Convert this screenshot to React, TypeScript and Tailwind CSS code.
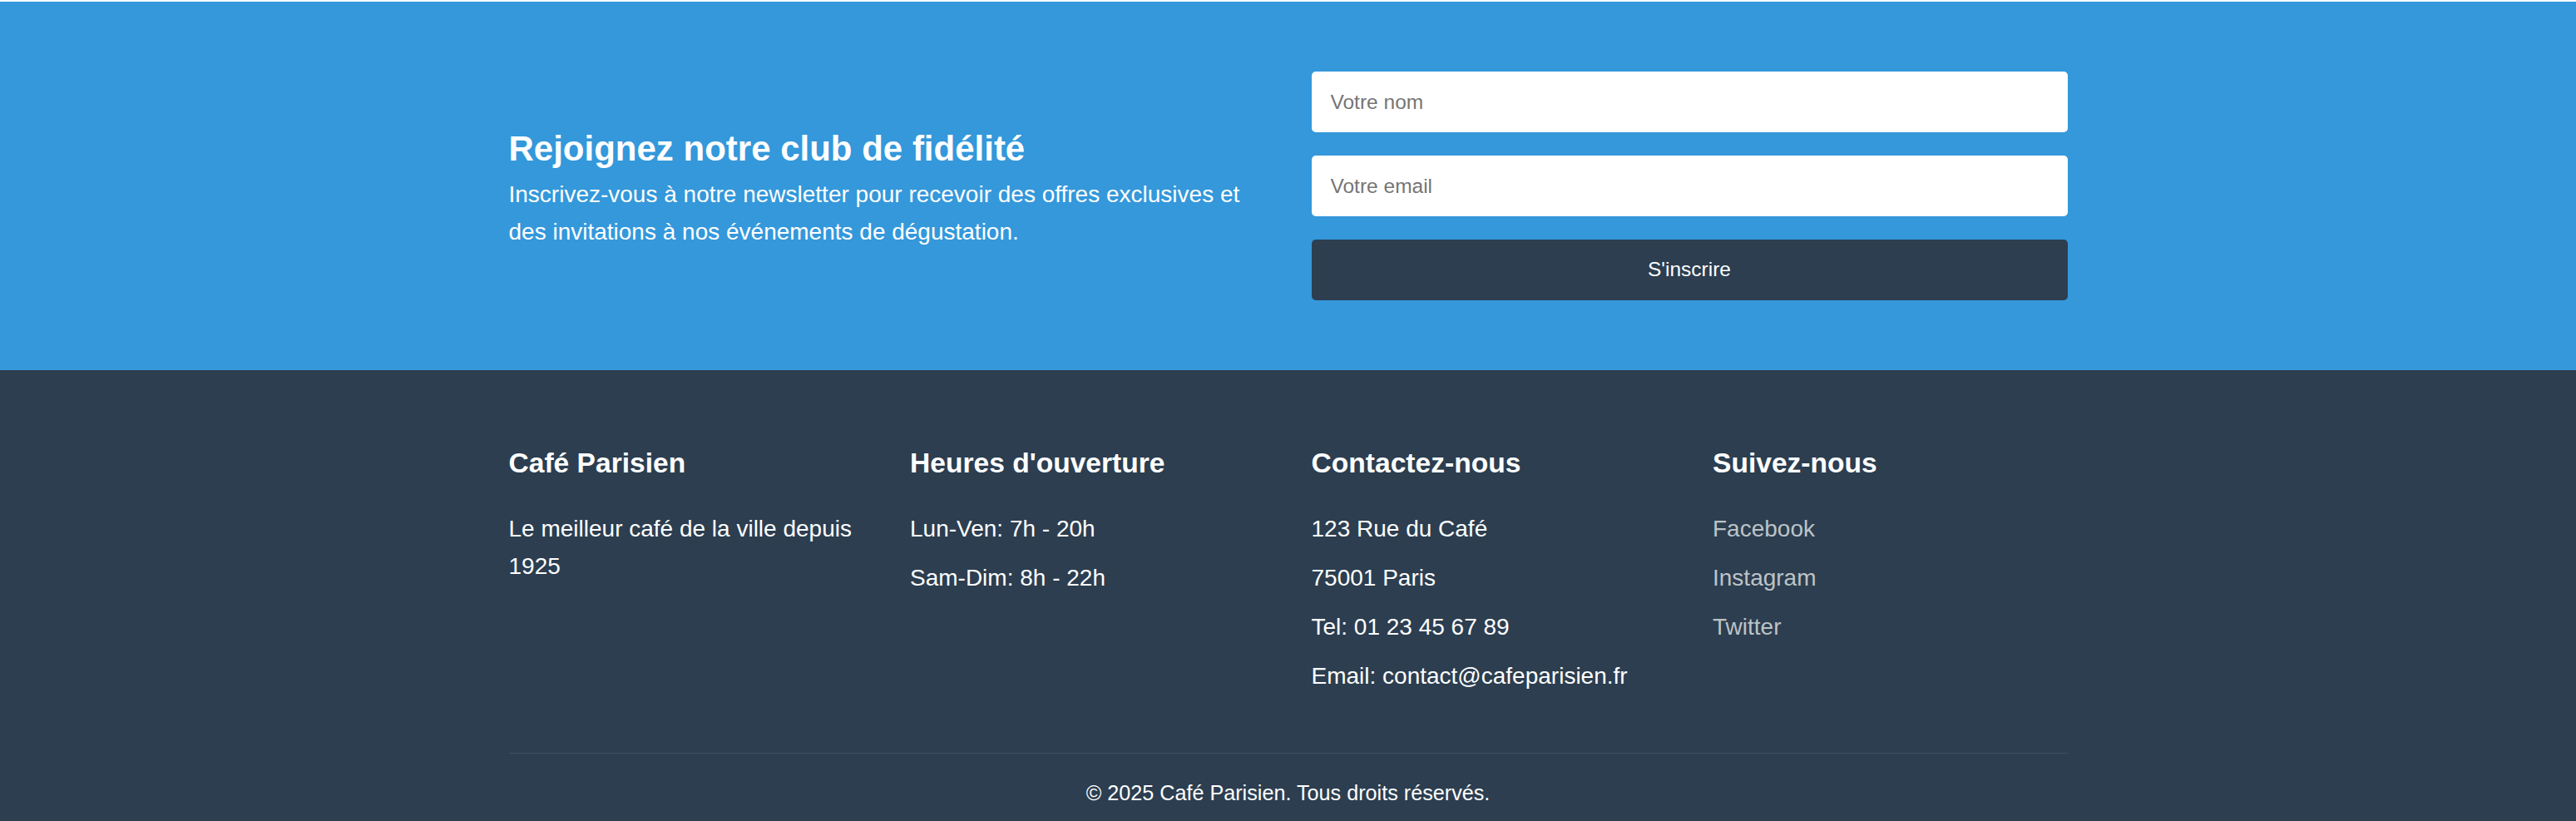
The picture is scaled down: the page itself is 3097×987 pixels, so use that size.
const hours = ['Lun-Ven: 7h - 20h', 'Sam-Dim: 8h - 22h'];
const contact = ['123 Rue du Café', '75001 Paris', 'Tel: 01 23 45 67 89', 'Email: contact@cafeparisien.fr'];
const socials = ['Facebook', 'Instagram', 'Twitter'];

function FooterColumn({ title, children }: { title: string; children: React.ReactNode }) {
  return (
    <div className="flex flex-col">
      <h3 className="mb-[38px] text-[33.6px] leading-[37px] font-bold text-white">{title}</h3>
      {children}
    </div>
  );
}

export default function App() {
  return (
    <div className="min-h-[987px] bg-white pt-[2px] font-['Liberation_Sans',Arial,sans-serif]">
      {/* newsletter */}
      <section className="bg-[#3498db] py-[84px]">
        <div className="mx-auto grid w-[1874px] grid-cols-2 items-center gap-[56px]">
          <div className="mt-[9px] text-white">
            <h2 className="mb-[9px] text-[42px] leading-[46px] font-bold">Rejoignez notre club de fidélité</h2>
            <p className="text-[28px] leading-[45px]">
              Inscrivez-vous à notre newsletter pour recevoir des offres exclusives et des invitations à nos
              événements de dégustation.
            </p>
          </div>
          <form className="flex flex-col gap-[28px]" onSubmit={(e) => e.preventDefault()}>
            <input
              type="text"
              placeholder="Votre nom"
              className="h-[73px] w-full rounded-[5px] bg-white px-[23px] text-[24.5px] text-[#333] placeholder:text-[#757575] outline-none"
            />
            <input
              type="email"
              placeholder="Votre email"
              className="h-[73px] w-full rounded-[5px] bg-white px-[23px] text-[24.5px] text-[#333] placeholder:text-[#757575] outline-none"
            />
            <button
              type="submit"
              className="h-[73px] w-full rounded-[5px] bg-[#2c3e50] text-[24.5px] text-white"
            >
              S'inscrire
            </button>
          </form>
        </div>
      </section>

      {/* footer */}
      <footer className="bg-[#2c3e50] pt-[93px] pb-[20px] text-white">
        <div className="mx-auto w-[1874px]">
          <div className="grid grid-cols-4 gap-[56px]">
            <FooterColumn title="Café Parisien">
              <p className="text-[28px] leading-[45px]">Le meilleur café de la ville depuis 1925</p>
            </FooterColumn>
            <FooterColumn title="Heures d'ouverture">
              <ul className="flex flex-col gap-[14px]">
                {hours.map((h) => (
                  <li key={h} className="text-[28px] leading-[45px]">{h}</li>
                ))}
              </ul>
            </FooterColumn>
            <FooterColumn title="Contactez-nous">
              <ul className="flex flex-col gap-[14px]">
                {contact.map((c) => (
                  <li key={c} className="text-[28px] leading-[45px]">{c}</li>
                ))}
              </ul>
            </FooterColumn>
            <FooterColumn title="Suivez-nous">
              <ul className="flex flex-col gap-[14px]">
                {socials.map((s) => (
                  <li key={s} className="text-[28px] leading-[45px]">
                    <a href="#" className="text-[#bdc3c7]">{s}</a>
                  </li>
                ))}
              </ul>
            </FooterColumn>
          </div>
          <div className="mt-[70px] border-t border-[#3d4f61] pt-[29px] text-center text-[25.2px] leading-[36px]">
            © 2025 Café Parisien. Tous droits réservés.
          </div>
        </div>
      </footer>
    </div>
  );
}
